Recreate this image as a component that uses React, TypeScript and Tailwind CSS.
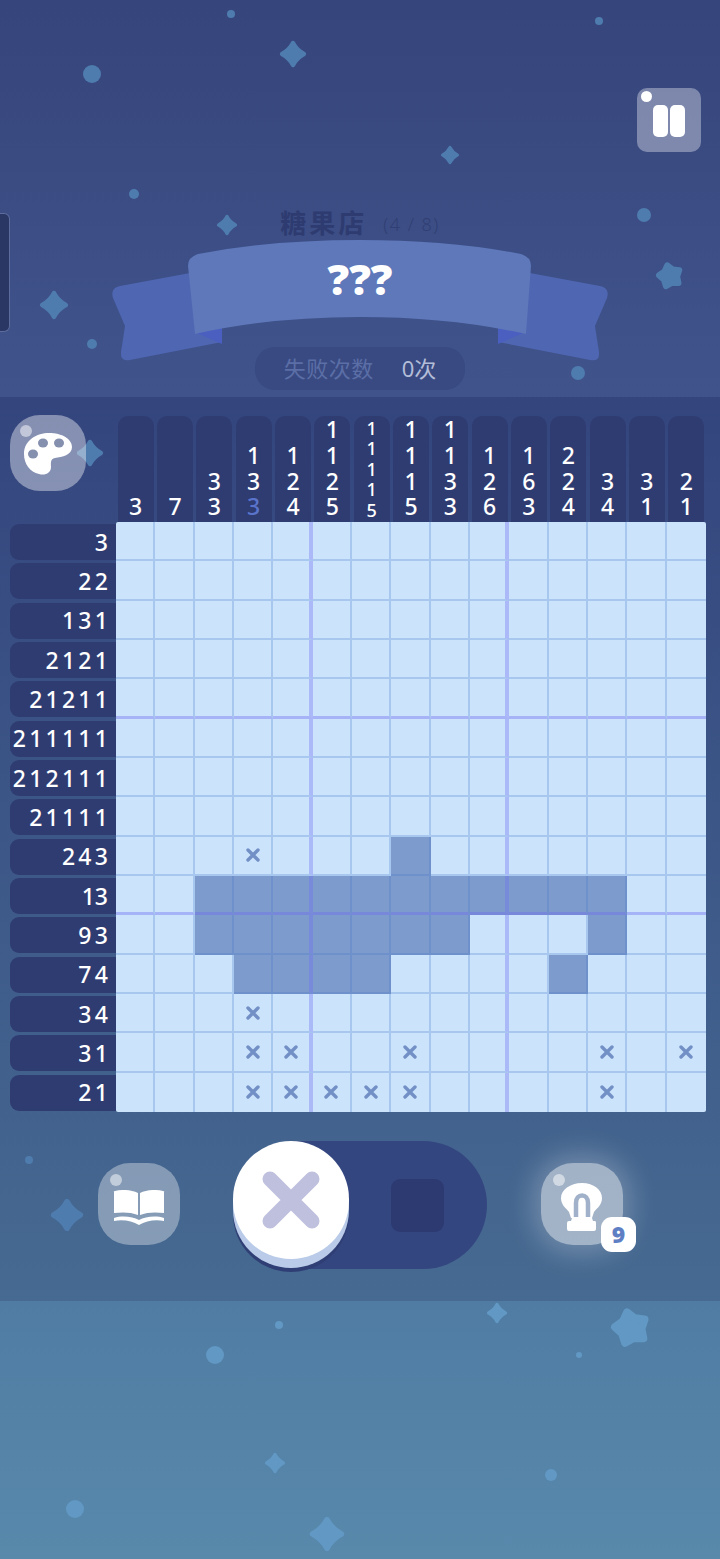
import React from 'react';

const fontClass = "font-['Noto_Sans','Noto_Sans_CJK_SC',sans-serif]";

const columnClues = [
  ['3'], ['7'], ['3', '3'], ['1', '3', '3'], ['1', '2', '4'], ['1', '1', '2', '5'],
  ['1', '1', '1', '1', '5'], ['1', '1', '1', '5'], ['1', '1', '3', '3'], ['1', '2', '6'],
  ['1', '6', '3'], ['2', '2', '4'], ['3', '4'], ['3', '1'], ['2', '1'],
];

const rowClues = [
  '3', '22', '131', '2121', '21211', '211111', '212111', '21111', '243', '13', '93', '74', '34', '31', '21',
];

const filled: Record<number, number[]> = {
  8: [7],
  9: [2, 3, 4, 5, 6, 7, 8, 9, 10, 11, 12],
  10: [2, 3, 4, 5, 6, 7, 8, 12],
  11: [3, 4, 5, 6, 11],
};

const crossed: Record<number, number[]> = {
  8: [3],
  12: [3],
  13: [3, 4, 7, 12, 14],
  14: [3, 4, 5, 6, 7, 12],
};

// x, y, radius
const dots = [
  [92, 74, 9], [231, 14, 4], [599, 21, 4], [134, 194, 5], [644, 215, 7], [92, 344, 5], [578, 373, 7],
  [29, 1160, 4], [279, 1325, 4], [215, 1355, 9], [579, 1355, 3], [551, 1475, 6], [75, 1509, 9],
];
const sparkles = [
  [293, 54, 13], [450, 155, 9], [227, 225, 10], [54, 305, 14], [90, 453, 13], [67, 1215, 16],
  [497, 1313, 10], [275, 1463, 10], [327, 1534, 17],
];
const stars = [
  [670, 276, 11, 6], [631, 1328, 16, 8],
];

// the sky gets lighter below the play area, the shapes follow it
const tint = (y: number) => (y > 1300 ? '#6298c4' : '#4f7cae');

function starPoints(cx: number, cy: number, r: number) {
  const pts: string[] = [];
  for (let i = 0; i < 10; i++) {
    const a = (Math.PI / 5) * i - Math.PI / 2 - 0.25;
    const d = i % 2 === 0 ? r : r * 0.65;
    pts.push(`${cx + Math.cos(a) * d},${cy + Math.sin(a) * d}`);
  }
  return pts.join(' ');
}

function Decorations() {
  return (
    <svg className="absolute inset-0" width="720" height="1559" viewBox="0 0 720 1559">
      {dots.map(([x, y, r]) => (
        <circle key={`${x}-${y}`} cx={x} cy={y} r={r} fill={tint(y)} />
      ))}
      {sparkles.map(([x, y, r]) => (
        <path
          key={`${x}-${y}`}
          transform={`translate(${x} ${y}) scale(${r})`}
          d="M0 -.84 Q.26 -.32 .84 0 Q.26 .32 0 .84 Q-.26 .32 -.84 0 Q-.26 -.32 0 -.84Z"
          fill={tint(y)}
          stroke={tint(y)}
          strokeWidth=".34"
          strokeLinejoin="round"
        />
      ))}
      {stars.map(([x, y, r, w]) => (
        <polygon
          key={`${x}-${y}`}
          points={starPoints(x, y, r)}
          fill={tint(y)}
          stroke={tint(y)}
          strokeWidth={w}
          strokeLinejoin="round"
        />
      ))}
    </svg>
  );
}

function Ribbon() {
  return (
    <div className="relative z-10 mx-auto h-[122px] w-[500px]">
      <svg width="500" height="122" viewBox="110 240 500 122" className="block">
        <path
          d="M190 273 L120 286 Q110 288 113 298 L125 326 L121 352 Q120 362 130 360 L222 342 L222 300Z"
          fill="#4f66b2"
        />
        <path
          d="M530 273 L600 286 Q610 288 607 298 L595 326 L599 352 Q600 362 590 360 L498 342 L498 300Z"
          fill="#4f66b2"
        />
        <path d="M197 333 L222 344 L222 324Z" fill="#4a5fc0" />
        <path d="M523 333 L498 344 L498 324Z" fill="#4a5fc0" />
        <path
          d="M188 266 Q188 257 198 254 Q270 240 360 240 Q450 240 521 254 Q531 257 531 266 L526 334 Q450 317 360 317 Q270 317 195 334Z"
          fill="#5e78ba"
        />
      </svg>
      <div className={`absolute inset-x-0 top-[14px] text-center text-[43px] leading-[50px] font-black text-white ${fontClass}`}>
        ???
      </div>
    </div>
  );
}

function PaletteIcon() {
  return (
    <svg width="50" height="44" viewBox="0 0 50 44">
      <path
        d="M1 22 C1 8 14 1 26 1 C39 1 49 7 49 15 C49 23 39 25 32 26 C27 27 28 31 28 35 C28 41 22 44 16 42 C7 40 1 32 1 22Z"
        fill="#fff"
      />
      <ellipse cx="10" cy="22" rx="5" ry="4.5" fill="#858fae" />
      <ellipse cx="20" cy="11" rx="5" ry="4.5" fill="#858fae" />
      <ellipse cx="36" cy="11" rx="5" ry="4.5" fill="#858fae" />
    </svg>
  );
}

function BookIcon() {
  return (
    <svg width="52" height="36" viewBox="0 0 52 36" fill="#fff">
      <path d="M1 2 Q0 1 2 1 C10 -1 19 0 25 3 L25 25 C18 22 9 22 1 23Z" />
      <path d="M51 2 Q52 1 50 1 C42 -1 33 0 27 3 L27 25 C34 22 43 22 51 23Z" />
      <path d="M1 28 C10 25 20 27 26 30 C32 27 42 25 51 28 L51 31 C42 29 33 31 26 35 C19 31 10 29 1 31Z" />
    </svg>
  );
}

function BulbIcon() {
  return (
    <svg width="42" height="48" viewBox="0 0 42 48">
      <path
        d="M21 0 C33 0 41 7 41 15 C41 22 36 25 33 29 L31 35 L10 35 L8 29 C5 25 0 22 0 15 C0 7 9 0 21 0Z"
        fill="#fff"
      />
      <path d="M15 34 L15 20 C15 10 27 10 27 20 L27 34" fill="none" stroke="#a1b1c9" strokeWidth="4.5" />
      <path d="M11 35 L31 35 L32 38 L34 38 Q35 38 35 40 L35 46 Q35 48 33 48 L8 48 Q6 48 6 46 L6 40 Q6 38 8 38 L10 38Z" fill="#fff" />
    </svg>
  );
}

function Shine({ className }: { className: string }) {
  return <div className={`absolute rounded-full bg-white/50 ${className}`} />;
}

function Board() {
  const cells = [];
  for (let r = 0; r < 15; r++) {
    for (let c = 0; c < 15; c++) {
      const isFilled = filled[r]?.includes(c);
      const isCrossed = crossed[r]?.includes(c);
      cells.push(
        <div
          key={`${r}-${c}`}
          className={`flex items-center justify-center ${isFilled ? 'bg-[#7e9bcd]' : ''} ${
            c === 4 || c === 9
              ? 'border-r-[4px] border-r-[#6f6cf2]/35'
              : c < 14
                ? 'border-r-2 border-r-[#3f74c8]/25'
                : ''
          } ${
            r === 4 || r === 9
              ? 'border-b-[3px] border-b-[#6f6cf2]/40'
              : r < 14
                ? 'border-b-2 border-b-[#3f74c8]/25'
                : ''
          }`}
        >
          {isCrossed && (
            <svg width="14" height="14" viewBox="0 0 14 14" stroke="#7390c6" strokeWidth="3.4" strokeLinecap="round">
              <path d="M2 2 L12 12 M12 2 L2 12" />
            </svg>
          )}
        </div>
      );
    }
  }
  return (
    <div className="grid h-[590px] w-[590px] grid-cols-[repeat(15,1fr)] grid-rows-[repeat(15,1fr)] overflow-hidden rounded-[2px] bg-[#cbe3fb]">
      {cells}
    </div>
  );
}

export default function App() {
  return (
    <div className={`relative h-[1559px] w-[720px] overflow-hidden ${fontClass}`}>
      <section className="h-[397px] bg-gradient-to-b from-[#36457c] to-[#40548b] pt-[88px]">
        <div className="flex justify-end pr-[19px]">
          <button className="relative z-10 flex h-[64px] w-[64px] items-center justify-center gap-[2px] rounded-[10px] bg-white/35">
            <Shine className="left-[4px] top-[3px] h-[11px] w-[11px] !bg-white" />
            <span className="mt-[2px] h-[32px] w-[15px] rounded-[5px] bg-white" />
            <span className="mt-[2px] h-[32px] w-[15px] rounded-[5px] bg-white" />
          </button>
        </div>

        <div className="relative z-10 mt-[55px] flex h-[32px] items-end justify-center gap-[16px] text-[#2e3b70]">
          <span className="text-[26px] leading-[32px] font-bold tracking-[3px]">糖果店</span>
          <span className="text-[18px] leading-[30px] font-light tracking-[1.5px] text-[#2e3b70]/80">(4 / 8)</span>
        </div>

        <div className="mt-[1px]">
          <Ribbon />
        </div>

        <div className="relative z-10 mx-auto -mt-[15px] flex h-[43px] w-[210px] items-center justify-center gap-[28px] rounded-[20px] bg-[#394a82] text-[22px]">
          <span className="tracking-[0.5px] text-[#5b6ea6]">失败次数</span>
          <span className="text-[#b3bdd8]">0次</span>
        </div>
      </section>

      {/* left drawer handle */}
      <div className="absolute left-0 top-[213px] z-10 h-[119px] w-[10px] rounded-r-[6px] border border-l-0 border-[#5c6c9d] bg-[#2a3765]" />

      <section className="h-[904px] bg-gradient-to-b from-[#34457e] to-[#466a91] pl-[10px] pt-[18px]">
        <div className="relative z-10 flex">
          <div className="flex w-[106px] flex-col">
            <button className="relative flex h-[76px] w-[76px] items-center justify-center rounded-[30px] bg-white/40">
              <Shine className="left-[10px] top-[10px] h-[12px] w-[12px]" />
              <span className="mt-[2px]">
                <PaletteIcon />
              </span>
            </button>
            <div className="mt-[33px] flex flex-col gap-[3.33px]">
              {rowClues.map((clue, i) => (
                <div
                  key={i}
                  className={`flex h-[36px] items-center justify-end rounded-l-[9px] bg-[#2f3c72] text-[23px] font-medium text-white ${
                    clue === '13' ? 'pr-[8px] tracking-[0px]' : 'pr-[5px] tracking-[3.2px]'
                  }`}
                >
                  {clue}
                </div>
              ))}
            </div>
          </div>

          <div>
            <div className="flex h-[107px] w-[590px] pt-[1px]">
              {columnClues.map((clue, i) => (
                <div key={i} className="flex h-full flex-1 justify-center px-[1.6px]">
                  <div
                    className={`flex w-full flex-col items-center justify-end rounded-t-[10px] bg-[#2f3c72] pb-[2px] font-medium text-white ${
                      clue.length > 4 ? 'text-[18px] leading-[20.5px]' : 'text-[23px] leading-[25.7px]'
                    }`}
                  >
                    {clue.map((n, j) => (
                      <span key={j} className={i === 3 && j === 2 ? 'text-[#5a74cc]' : ''}>
                        {n}
                      </span>
                    ))}
                  </div>
                </div>
              ))}
            </div>
            <Board />
          </div>
        </div>

        <div className="relative z-10 mt-[29px] flex items-start pl-[88px]">
          <button className="relative mt-[22px] flex h-[82px] w-[82px] items-center justify-center rounded-[32px] bg-white/35">
            <Shine className="left-[12px] top-[11px] h-[12px] w-[12px]" />
            <span className="mt-[8px]">
              <BookIcon />
            </span>
          </button>

          <div className="relative ml-[53px] flex h-[128px] w-[254px] items-center justify-end rounded-full bg-[#344680] pr-[43px]">
            <div className="h-[53px] w-[53px] rounded-[9px] bg-[#2d3a72]" />
            <div className="absolute left-0 top-0 flex h-[118px] w-[116px] items-center justify-center rounded-full bg-white shadow-[0_9px_0_0_#b9cbe8,0_13px_0_0_#2f3e74]">
              <svg width="58" height="58" viewBox="0 0 58 58" stroke="#bfc0de" strokeWidth="15" strokeLinecap="round">
                <path d="M8 8 L50 50 M50 8 L8 50" />
              </svg>
            </div>
          </div>

          <button className="relative ml-[54px] mt-[22px] flex h-[82px] w-[82px] items-center justify-center rounded-[32px] bg-white/50 shadow-[0_0_28px_8px_rgba(255,255,255,0.25)]">
            <Shine className="left-[12px] top-[11px] h-[12px] w-[12px]" />
            <span className="mt-[5px]">
              <BulbIcon />
            </span>
            <span className="absolute -bottom-[7px] -right-[13px] flex h-[35px] w-[35px] items-center justify-center rounded-[11px] bg-white text-[23px] leading-none font-black text-[#5f7fc4]">
              9
            </span>
          </button>
        </div>
      </section>

      <section className="h-[258px] bg-gradient-to-b from-[#507ca3] to-[#5889ab]" />

      <Decorations />
    </div>
  );
}
